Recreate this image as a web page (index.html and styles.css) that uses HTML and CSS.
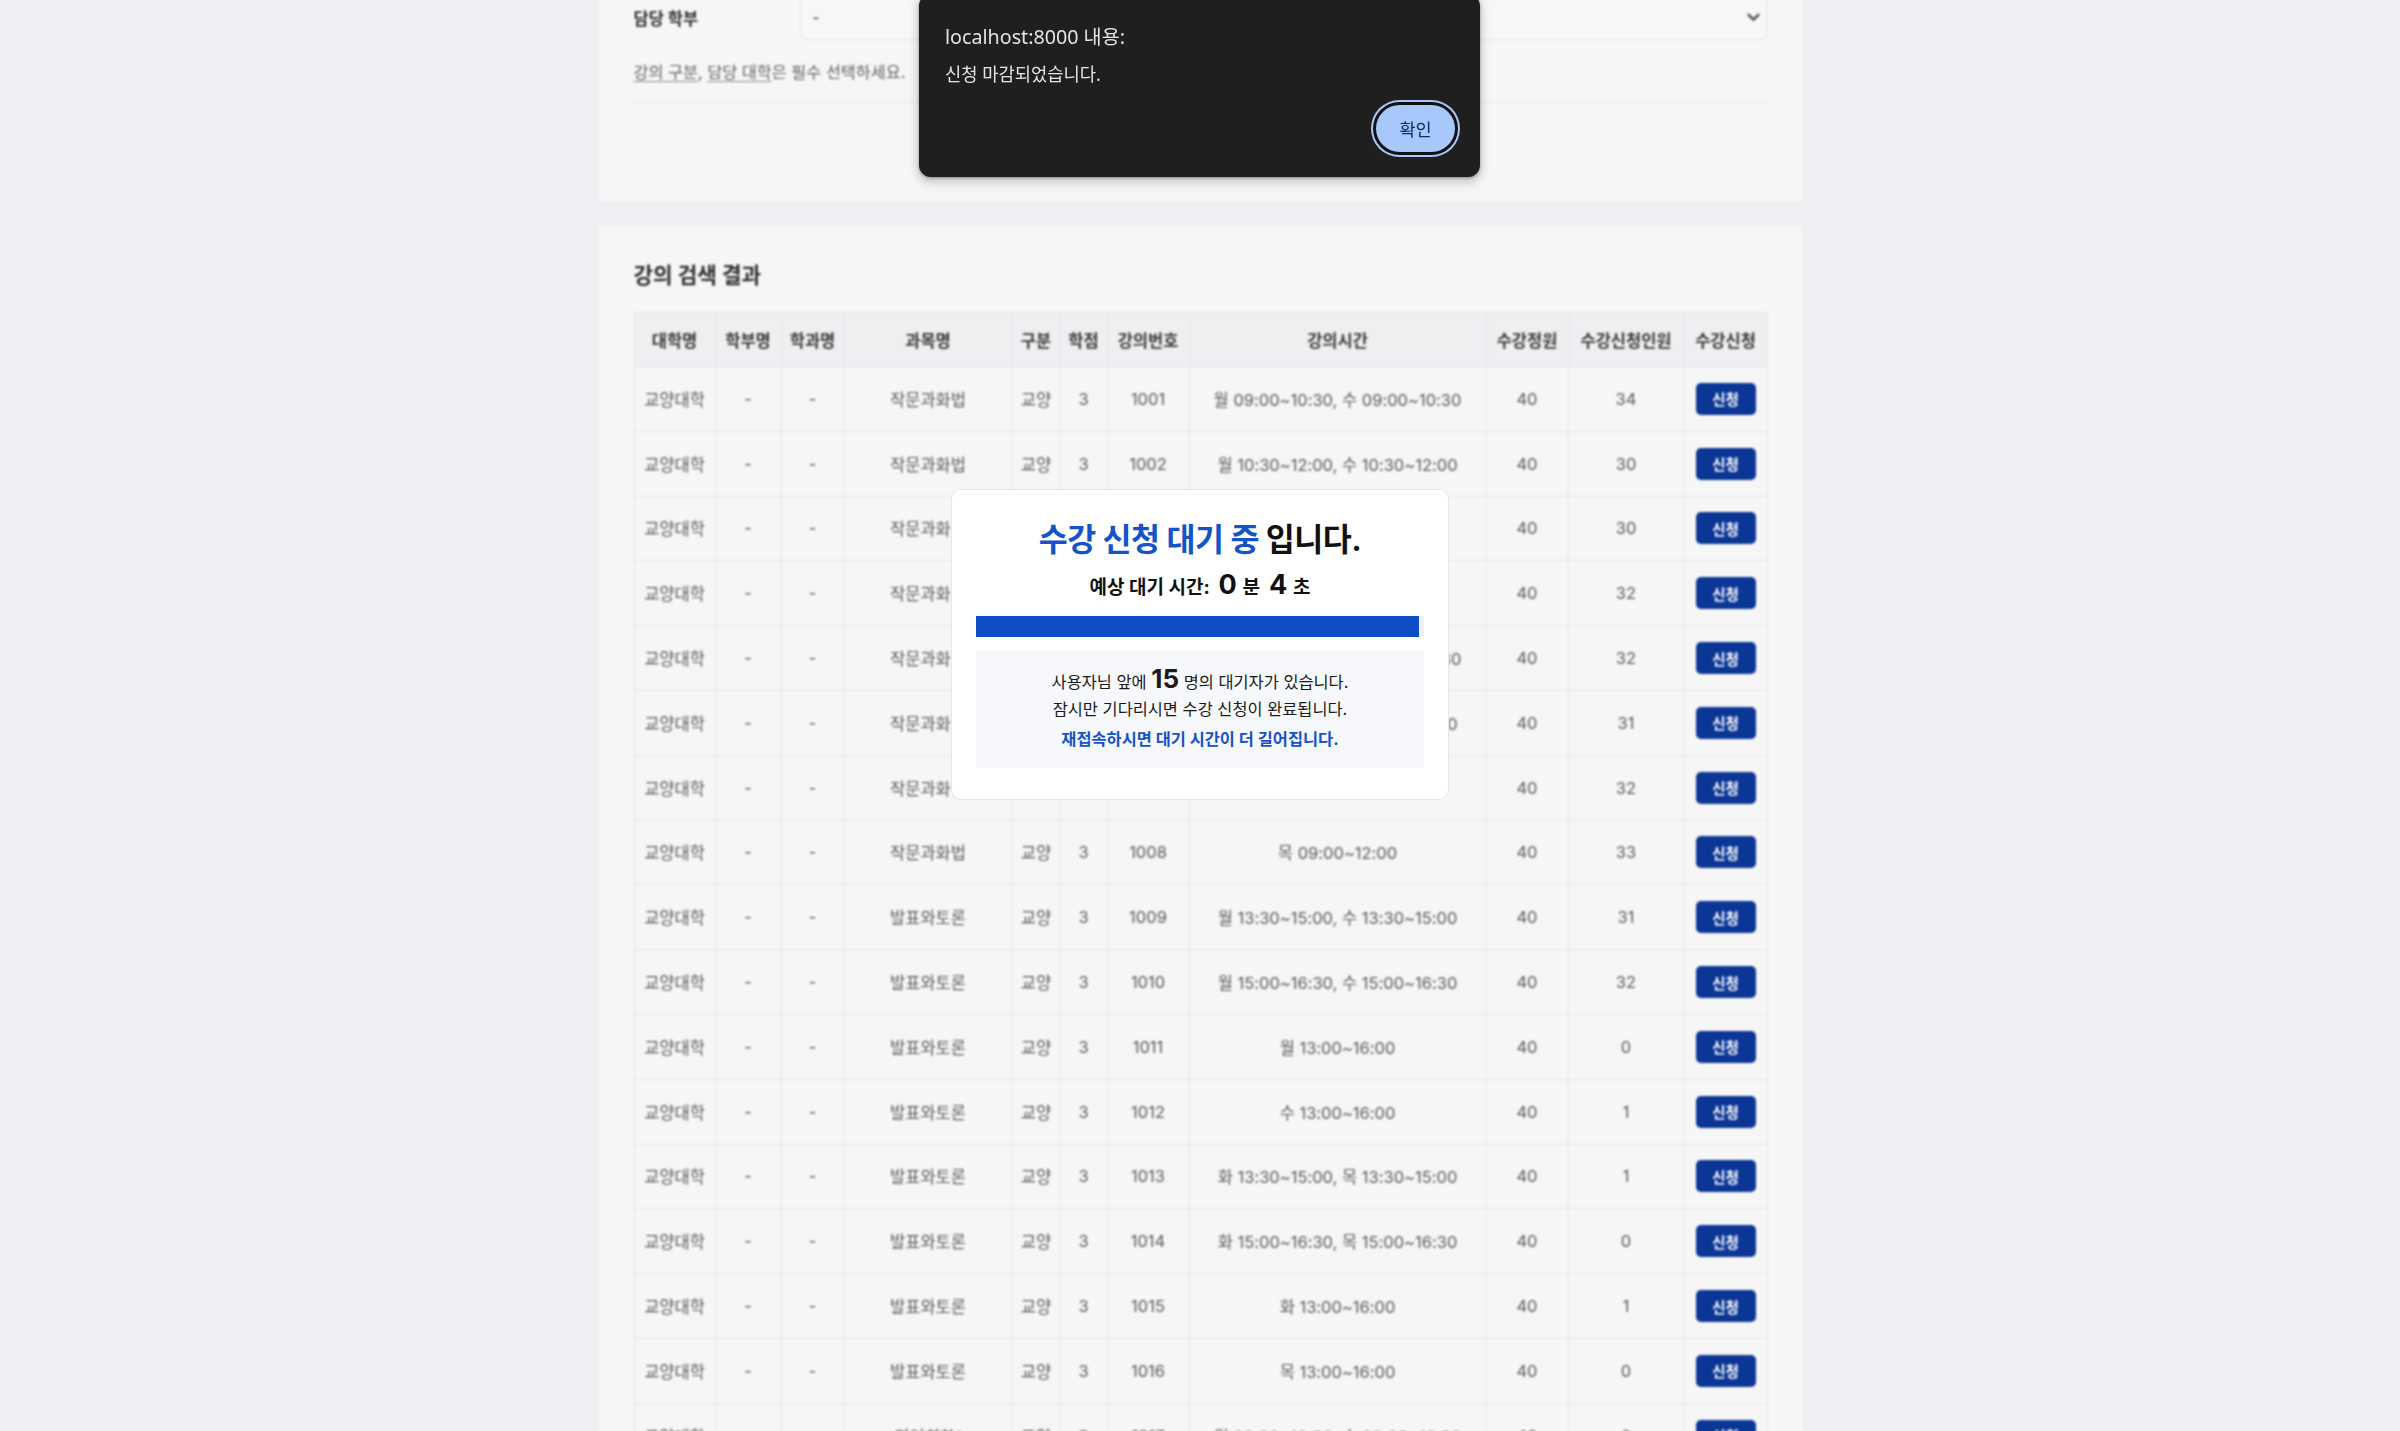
FILE: index.html
```html
<!DOCTYPE html>
<html lang="ko">
<head>
<meta charset="utf-8">
<title>수강신청</title>
<link rel="stylesheet" href="styles.css">
</head>
<body>
<div class="page">
  <section class="card card-form">
    <div class="form-row">
      <label class="form-label">담당 학부</label>
      <div class="select">
        <span class="select-value">-</span>
        <svg class="chevron" viewBox="0 0 12 8" width="13" height="9"><path d="M1.5 1.5 6 6l4.5-4.5" fill="none" stroke="#4a4a4a" stroke-width="2.2" stroke-linecap="round" stroke-linejoin="round"/></svg>
      </div>
    </div>
    <p class="helper"><u>강의 구분</u>, <u>담당 대학</u>은 필수 선택하세요.</p>
    <hr class="divider">
  </section>

  <section class="card card-results">
    <h2 class="results-title">강의 검색 결과</h2>
    <table class="results">
      <colgroup>
        <col class="c-univ"><col class="c-dept"><col class="c-major"><col class="c-subj"><col class="c-type"><col class="c-credit"><col class="c-no"><col class="c-time"><col class="c-cap"><col class="c-count"><col class="c-apply">
      </colgroup>
      <thead>
        <tr><th>대학명</th><th>학부명</th><th>학과명</th><th>과목명</th><th>구분</th><th>학점</th><th>강의번호</th><th>강의시간</th><th>수강정원</th><th>수강신청인원</th><th>수강신청</th></tr>
      </thead>
      <tbody>
        <tr><td>교양대학</td><td>-</td><td>-</td><td>작문과화법</td><td>교양</td><td>3</td><td>1001</td><td>월 09:00~10:30, 수 09:00~10:30</td><td>40</td><td>34</td><td><button class="apply">신청</button></td></tr>
        <tr><td>교양대학</td><td>-</td><td>-</td><td>작문과화법</td><td>교양</td><td>3</td><td>1002</td><td>월 10:30~12:00, 수 10:30~12:00</td><td>40</td><td>30</td><td><button class="apply">신청</button></td></tr>
        <tr><td>교양대학</td><td>-</td><td>-</td><td>작문과화법</td><td>교양</td><td>3</td><td>1003</td><td>화 09:00~12:00</td><td>40</td><td>30</td><td><button class="apply">신청</button></td></tr>
        <tr><td>교양대학</td><td>-</td><td>-</td><td>작문과화법</td><td>교양</td><td>3</td><td>1004</td><td>수 09:00~12:00</td><td>40</td><td>32</td><td><button class="apply">신청</button></td></tr>
        <tr><td>교양대학</td><td>-</td><td>-</td><td>작문과화법</td><td>교양</td><td>3</td><td>1005</td><td>화 09:00~10:30, 목 09:00~10:30</td><td>40</td><td>32</td><td><button class="apply">신청</button></td></tr>
        <tr><td>교양대학</td><td>-</td><td>-</td><td>작문과화법</td><td>교양</td><td>3</td><td>1006</td><td>화 10:30~12:00, 목 10:30~12:00</td><td>40</td><td>31</td><td><button class="apply">신청</button></td></tr>
        <tr><td>교양대학</td><td>-</td><td>-</td><td>작문과화법</td><td>교양</td><td>3</td><td>1007</td><td>금 09:00~12:00</td><td>40</td><td>32</td><td><button class="apply">신청</button></td></tr>
        <tr><td>교양대학</td><td>-</td><td>-</td><td>작문과화법</td><td>교양</td><td>3</td><td>1008</td><td>목 09:00~12:00</td><td>40</td><td>33</td><td><button class="apply">신청</button></td></tr>
        <tr><td>교양대학</td><td>-</td><td>-</td><td>발표와토론</td><td>교양</td><td>3</td><td>1009</td><td>월 13:30~15:00, 수 13:30~15:00</td><td>40</td><td>31</td><td><button class="apply">신청</button></td></tr>
        <tr><td>교양대학</td><td>-</td><td>-</td><td>발표와토론</td><td>교양</td><td>3</td><td>1010</td><td>월 15:00~16:30, 수 15:00~16:30</td><td>40</td><td>32</td><td><button class="apply">신청</button></td></tr>
        <tr><td>교양대학</td><td>-</td><td>-</td><td>발표와토론</td><td>교양</td><td>3</td><td>1011</td><td>월 13:00~16:00</td><td>40</td><td>0</td><td><button class="apply">신청</button></td></tr>
        <tr><td>교양대학</td><td>-</td><td>-</td><td>발표와토론</td><td>교양</td><td>3</td><td>1012</td><td>수 13:00~16:00</td><td>40</td><td>1</td><td><button class="apply">신청</button></td></tr>
        <tr><td>교양대학</td><td>-</td><td>-</td><td>발표와토론</td><td>교양</td><td>3</td><td>1013</td><td>화 13:30~15:00, 목 13:30~15:00</td><td>40</td><td>1</td><td><button class="apply">신청</button></td></tr>
        <tr><td>교양대학</td><td>-</td><td>-</td><td>발표와토론</td><td>교양</td><td>3</td><td>1014</td><td>화 15:00~16:30, 목 15:00~16:30</td><td>40</td><td>0</td><td><button class="apply">신청</button></td></tr>
        <tr><td>교양대학</td><td>-</td><td>-</td><td>발표와토론</td><td>교양</td><td>3</td><td>1015</td><td>화 13:00~16:00</td><td>40</td><td>1</td><td><button class="apply">신청</button></td></tr>
        <tr><td>교양대학</td><td>-</td><td>-</td><td>발표와토론</td><td>교양</td><td>3</td><td>1016</td><td>목 13:00~16:00</td><td>40</td><td>0</td><td><button class="apply">신청</button></td></tr>
        <tr><td>교양대학</td><td>-</td><td>-</td><td>영어회화1</td><td>교양</td><td>2</td><td>1017</td><td>월 09:00~10:30, 수 09:00~10:30</td><td>40</td><td>0</td><td><button class="apply">신청</button></td></tr>
      </tbody>
    </table>
  </section>
</div>

<div class="wait-modal">
  <h1 class="wait-title"><span class="accent">수강 신청 대기 중</span> 입니다.</h1>
  <p class="wait-time"><span class="wait-label">예상 대기 시간:</span> <strong class="big">0</strong> 분 <strong class="big">4</strong> 초</p>
  <div class="progress"><div class="progress-fill" style="width: 98.9%"></div></div>
  <div class="wait-info">
    <p class="line line-1">사용자님 앞에 <strong class="big-count">15</strong> 명의 대기자가 있습니다.</p>
    <p class="line">잠시만 기다리시면 수강 신청이 완료됩니다.</p>
    <p class="line line-warn">재접속하시면 대기 시간이 더 길어집니다.</p>
  </div>
</div>

<div class="alert" role="alertdialog">
  <div class="alert-title">localhost:8000 내용:</div>
  <div class="alert-msg">신청 마감되었습니다.</div>
  <button class="alert-ok">확인</button>
</div>
</body>
</html>
```

FILE: styles.css
```css
html, body {
  margin: 0;
  padding: 0;
  overflow: hidden;
  height: 100%;
}

body {
  background: #eef0f3;
  font-family: Inter, "Noto Sans CJK KR", sans-serif;
  color: #333;
}

.page {
  width: 1207px;
  margin: -5px auto 0;
  filter: blur(1.1px);
}

.card {
  background: #f6f6f6;
  border: 1px solid #e8eaee;
  box-sizing: border-box;
  padding: 0 36px;
}

.card-form {
  padding-bottom: 99px;
  border-top: none;
}

.form-row {
  display: flex;
  align-items: center;
  height: 45px;
}

.form-label {
  width: 166px;
  flex: none;
  font-size: 16.5px;
  font-weight: 700;
  color: #2b2b2b;
}

.select {
  flex: 1;
  height: 45px;
  box-sizing: border-box;
  border: 1px solid #e2e4e9;
  border-radius: 6px;
  display: flex;
  align-items: center;
  justify-content: space-between;
  padding: 0 6px 0 12px;
  background: #f7f7f7;
}

.select-value {
  font-size: 15px;
  color: #333;
}

.chevron {
  display: block;
}

.helper {
  margin: 21px 0 0;
  font-size: 16.3px;
  line-height: 22px;
  color: #606060;
}

.helper u {
  text-underline-offset: 3px;
  text-decoration-color: #888;
}

.divider {
  margin: 19px 0 0;
  border: none;
  border-top: 1px solid #e3e5ea;
  height: 0;
}

.card-results {
  margin-top: 21px;
  padding-top: 36px;
}

.results-title {
  margin: 0 0 23px;
  font-size: 21.3px;
  line-height: 28px;
  font-weight: 700;
  color: #2e2e2e;
}

.results {
  width: 1133px;
  table-layout: fixed;
  border-collapse: collapse;
  font-size: 16.5px;
}

.c-univ { width: 81px; }
.c-dept { width: 66px; }
.c-major { width: 63px; }
.c-subj { width: 168px; }
.c-type { width: 48px; }
.c-credit { width: 47px; }
.c-no { width: 82px; }
.c-time { width: 297px; }
.c-cap { width: 82px; }
.c-count { width: 116px; }
.c-apply { width: 83px; }

.results th,
.results td {
  border: 1px solid #e4e6eb;
  text-align: center;
  padding: 0;
  white-space: nowrap;
}

.results th {
  height: 53px;
  background: #eeeff1;
  font-weight: 700;
  color: #383838;
}

.results td {
  height: 63.8px;
  color: #5a5a5a;
  background: #f6f6f6;
}

.apply {
  width: 60px;
  height: 32px;
  border: none;
  border-radius: 5px;
  background: #0b3696;
  color: #fff;
  font-family: inherit;
  font-size: 14.5px;
  font-weight: 700;
  padding: 0;
  vertical-align: middle;
}

/* waiting modal */
.wait-modal {
  position: fixed;
  left: 951px;
  top: 489px;
  width: 498px;
  box-sizing: border-box;
  background: #fff;
  border: 1px solid #e3e7ef;
  border-radius: 10px;
  padding: 31px 24px;
  text-align: center;
  color: #111;
}

.wait-title {
  margin: 0;
  font-size: 31.5px;
  line-height: 38px;
  font-weight: 700;
  letter-spacing: -0.5px;
  color: #111;
}

.accent {
  color: #1553c8;
}

.wait-time {
  margin: 12px 0 0;
  line-height: 30px;
  font-size: 19px;
  font-weight: 600;
}

.wait-label {
  font-weight: 700;
}

.big {
  font-size: 27px;
  line-height: 1;
  font-weight: 700;
  margin: 0 1px 0 4px;
}

.progress {
  margin-top: 13px;
  height: 21px;
  background: #eef1f6;
}

.progress-fill {
  height: 100%;
  background: #0d4ec6;
}

.wait-info {
  margin-top: 13px;
  background: #f6f8fb;
  padding: 16px 0 17px;
}

.line {
  margin: 0;
  font-size: 16.4px;
  line-height: 24px;
  color: #1a1a1a;
}

.line-1 {
  line-height: 30px;
}

.big-count {
  font-size: 26px;
  line-height: 1;
  font-weight: 700;
}

.line-warn {
  margin-top: 6px;
  font-weight: 700;
  color: #1553c8;
}

/* browser alert */
.alert {
  position: fixed;
  left: 919px;
  top: -6px;
  width: 561px;
  height: 183px;
  box-sizing: border-box;
  background: #1f1f1f;
  border-radius: 12px;
  padding: 31px 25px 25px 26px;
  display: flex;
  flex-direction: column;
  align-items: flex-start;
  box-shadow: 0 4px 10px 2px rgba(0, 0, 0, 0.18), 0 1px 3px rgba(0, 0, 0, 0.35);
  font-family: "Noto Sans", "Noto Sans CJK KR", sans-serif;
  color: #e3e3e3;
}

.alert-title {
  font-size: 19.7px;
  line-height: 24px;
}

.alert-msg {
  margin-top: 13px;
  font-size: 17.7px;
  line-height: 24px;
}

.alert-ok {
  margin-top: auto;
  align-self: flex-end;
  width: 79px;
  height: 47px;
  border: none;
  border-radius: 24px;
  background: #a8c7fa;
  color: #062e6f;
  font-family: "Noto Sans", "Noto Sans CJK KR", sans-serif;
  font-size: 17.5px;
  padding: 0;
  box-shadow: 0 0 0 3px #121212, 0 0 0 5px #a8c7fa;
}
```
